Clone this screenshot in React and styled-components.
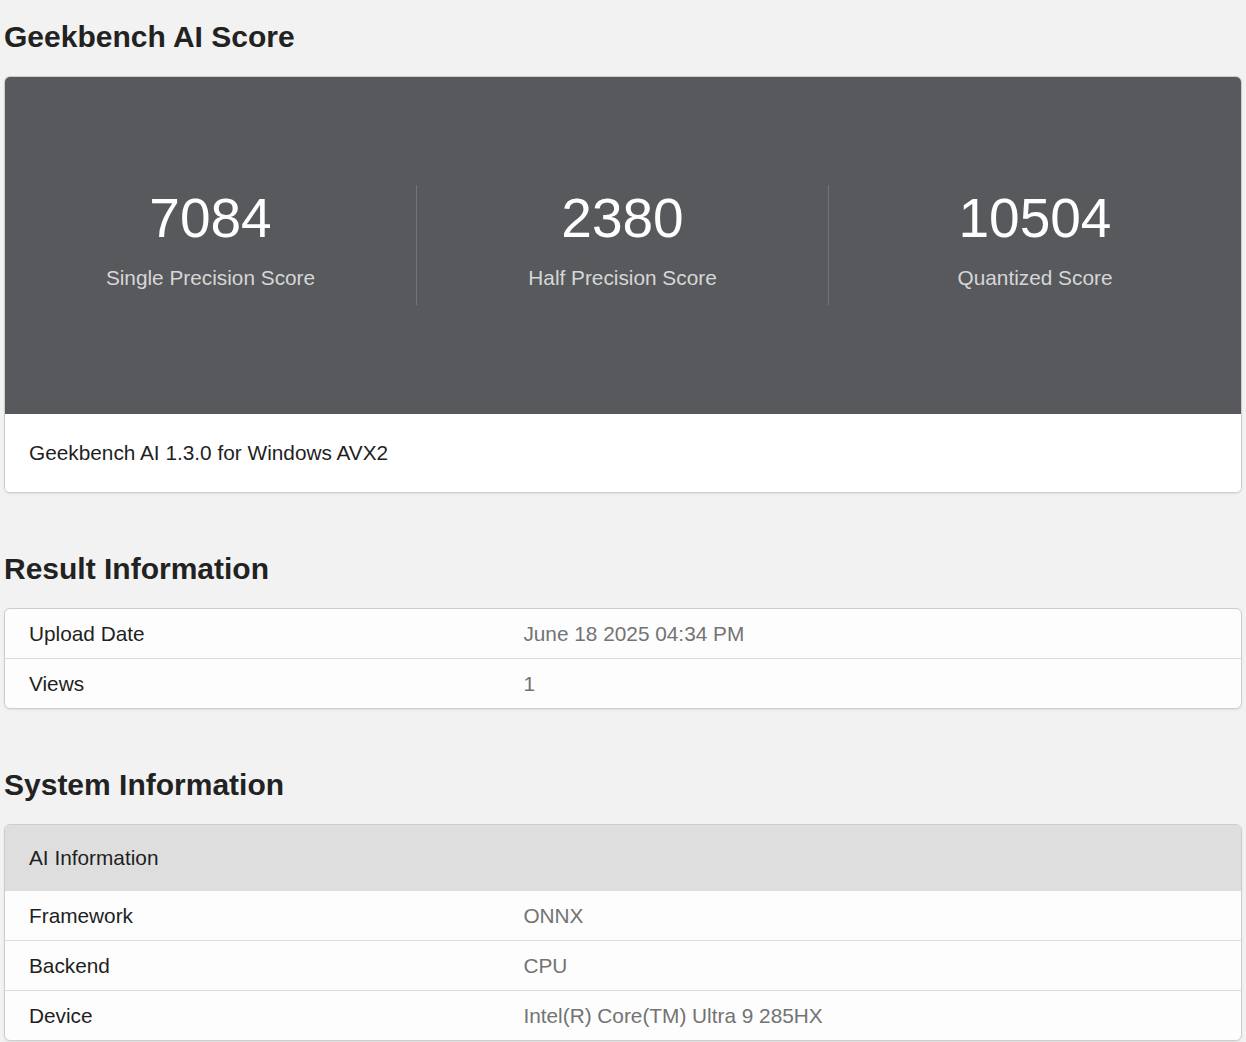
import React from "react";
import styled, { createGlobalStyle } from "styled-components";

const scores = [
  { value: "7084", label: "Single Precision Score" },
  { value: "2380", label: "Half Precision Score" },
  { value: "10504", label: "Quantized Score" },
];

const resultInfo = [
  { label: "Upload Date", value: "June 18 2025 04:34 PM" },
  { label: "Views", value: "1" },
];

const aiInfo = [
  { label: "Framework", value: "ONNX" },
  { label: "Backend", value: "CPU" },
  { label: "Device", value: "Intel(R) Core(TM) Ultra 9 285HX" },
];

export default function App() {
  return (
    <>
      <GlobalStyle />
      <Page>
        <SectionTitle $first>Geekbench AI Score</SectionTitle>
        <Card>
          <ScorePanel>
            {scores.map((s, i) => (
              <ScoreColumn key={s.label} $divider={i < scores.length - 1}>
                <ScoreValue>{s.value}</ScoreValue>
                <ScoreLabel>{s.label}</ScoreLabel>
              </ScoreColumn>
            ))}
          </ScorePanel>
          <CardFooter>Geekbench AI 1.3.0 for Windows AVX2</CardFooter>
        </Card>

        <SectionTitle>Result Information</SectionTitle>
        <Card>
          {resultInfo.map((row, i) => (
            <InfoRow key={row.label} $first={i === 0}>
              <InfoLabel>{row.label}</InfoLabel>
              <InfoValue>{row.value}</InfoValue>
            </InfoRow>
          ))}
        </Card>

        <SectionTitle>System Information</SectionTitle>
        <Card>
          <HeaderRow>AI Information</HeaderRow>
          {aiInfo.map((row, i) => (
            <InfoRow key={row.label} $first={i === 0}>
              <InfoLabel>{row.label}</InfoLabel>
              <InfoValue>{row.value}</InfoValue>
            </InfoRow>
          ))}
        </Card>
      </Page>
    </>
  );
}

const GlobalStyle = createGlobalStyle`
  html {
    scrollbar-width: none;
  }
  body {
    margin: 0;
    background: #f2f2f2;
    color: #1f1f1f;
    font-family: "Liberation Sans", Arial, sans-serif;
    font-size: 20.8px;
  }
`;

const Page = styled.div`
  padding: 0 4px 40px;
`;

const SectionTitle = styled.h2`
  margin: ${(p) => (p.$first ? "19px" : "58px")} 0 21px;
  font-size: 30px;
  line-height: 36px;
  font-weight: bold;
  color: #222;
`;

const Card = styled.div`
  background: #fdfdfd;
  border: 1px solid #cdcdcd;
  border-radius: 6px;
  overflow: hidden;
  box-shadow: 0 1px 2px rgba(0, 0, 0, 0.08);
`;

const ScorePanel = styled.div`
  display: grid;
  grid-template-columns: repeat(3, 1fr);
  padding: 108px 0 109px;
  background: #58595d;
`;

const ScoreColumn = styled.div`
  text-align: center;
  padding-bottom: 12px;
  border-right: ${(p) => (p.$divider ? "1px solid #737478" : "none")};
`;

const ScoreValue = styled.div`
  font-size: 55px;
  line-height: 66px;
  color: #fff;
`;

const ScoreLabel = styled.div`
  margin-top: 11px;
  line-height: 31px;
  color: #d6d6d6;
`;

const CardFooter = styled.div`
  padding: 24px;
  line-height: 30px;
  background: #fff;
`;

const HeaderRow = styled.div`
  padding: 17px 24px 18px;
  line-height: 31px;
  background: #dedede;
`;

const InfoRow = styled.div`
  display: grid;
  grid-template-columns: 40% 60%;
  border-top: ${(p) => (p.$first ? "none" : "1px solid #dcdcdc")};
`;

const InfoLabel = styled.div`
  padding: 9px 24px;
  line-height: 31px;
`;

const InfoValue = styled.div`
  padding: 9px 24px;
  line-height: 31px;
  color: #737373;
`;
